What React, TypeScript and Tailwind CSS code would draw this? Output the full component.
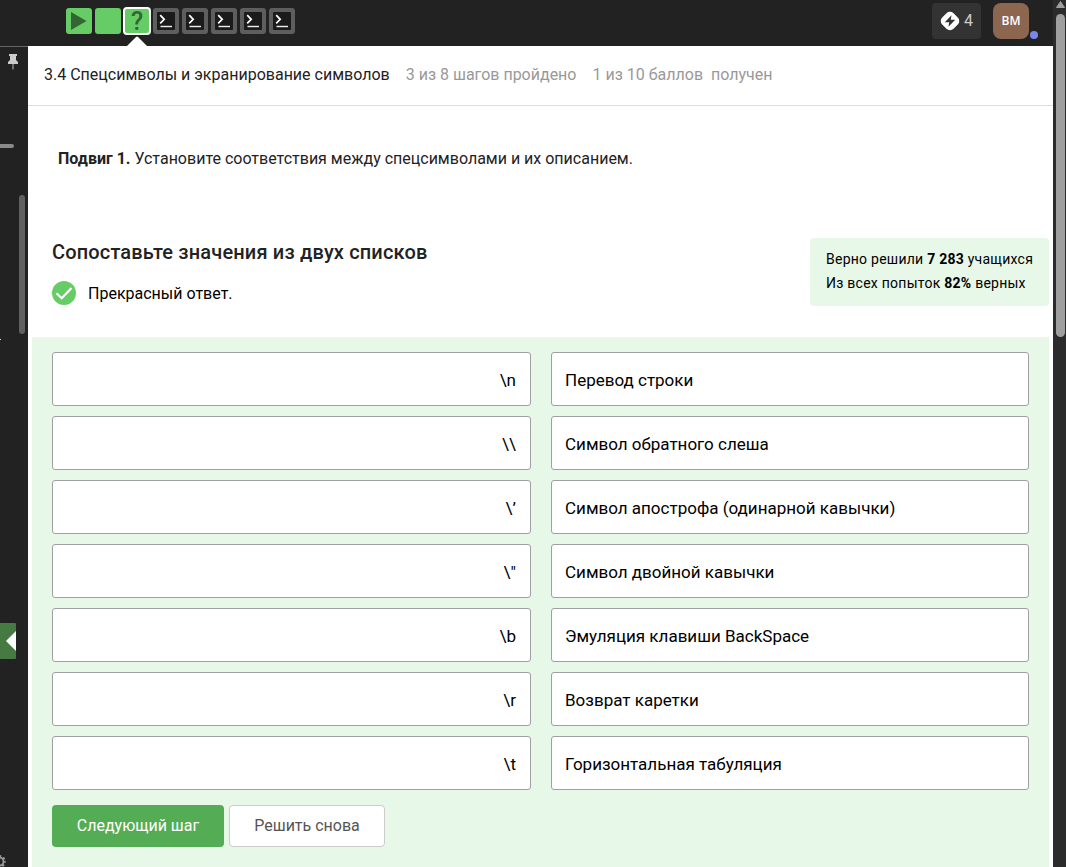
import React from "react";

const pairs: [string, string][] = [
  ["\\n", "Перевод строки"],
  ["\\\\", "Символ обратного слеша"],
  ["\\’", "Символ апострофа (одинарной кавычки)"],
  ["\\\"", "Символ двойной кавычки"],
  ["\\b", "Эмуляция клавиши BackSpace"],
  ["\\r", "Возврат каретки"],
  ["\\t", "Горизонтальная табуляция"],
];

function TerminalStep() {
  return (
    <div className="flex h-[26px] w-[26px] items-center justify-center rounded-[3px] bg-[#5e5e5e]">
      <svg width="18" height="18" viewBox="0 0 18 18" fill="none" stroke="#fff">
        <rect width="18" height="18" rx="1" fill="#1b1b1b" stroke="none" />
        <path d="M3.2 3.2 L7.2 7.3 L3.2 11.4" strokeWidth="1.7" />
        <path d="M3.5 14.5 H15" strokeWidth="1.4" stroke="#eee" />
      </svg>
    </div>
  );
}

function Header() {
  return (
    <header className="flex h-[46px] shrink-0 items-start bg-[#222] pl-[66px]">
      <nav className="flex gap-[3px] pt-2">
        <div className="flex h-[26px] w-[26px] items-center rounded-[3px] bg-[#66cc66] pl-[5px]">
          <svg width="16" height="18" viewBox="0 0 16 18">
            <path d="M0 0 L15.5 9 L0 18 Z" fill="#336633" />
          </svg>
        </div>
        <div className="h-[26px] w-[26px] rounded-[3px] bg-[#66cc66]" />
        <div className="relative -mx-px -mt-px flex h-7 w-7 items-center justify-center rounded-[4px] border-2 border-white bg-[#66cc66]">
          <span className="pt-[2px] text-[25px] leading-[24px] font-medium text-[#336633]">?</span>
          <svg className="absolute top-[27px] left-[2px]" width="20" height="10" viewBox="0 0 20 10">
            <path d="M0 10 L9 1 Q10 0 11 1 L20 10 Z" fill="#fff" />
          </svg>
        </div>
        <TerminalStep />
        <TerminalStep />
        <TerminalStep />
        <TerminalStep />
        <TerminalStep />
      </nav>
      <div className="ml-auto flex pt-[3px] pr-6">
        <div className="flex h-9 w-[49px] items-center rounded-[4px] bg-[#333] pl-2">
          <svg width="20" height="20" viewBox="0 0 20 20">
            <rect x="2" y="2" width="16" height="16" rx="5" fill="#fff" transform="rotate(45 10 10)" />
            <path d="M11.5 4.2 L4.8 11.2 H9.2 L8.5 15.8 L15.2 8.8 H10.8 Z" fill="#333" />
          </svg>
          <span className="ml-1 text-[16px] leading-6 text-[#ccc]">4</span>
        </div>
        <div className="relative ml-3 flex h-9 w-9 items-center justify-center rounded-[8px] bg-[#8d6650]">
          <span className="font-['Open_Sans','Noto_Sans',sans-serif] text-[12px] leading-4 font-semibold text-white">BM</span>
          <span className="absolute top-7 left-[37px] h-2 w-2 rounded-full bg-[#7888e8]" />
        </div>
      </div>
    </header>
  );
}

function Sidebar() {
  return (
    <aside className="relative w-7 shrink-0 overflow-hidden border-t border-[#666] bg-[#222]">
      <svg className="absolute top-[7px] left-2" width="10" height="16" viewBox="0 0 10 16">
        <path d="M1 0 H9 V2 H8 V6 L10 8 V10 H0 V8 L2 6 V2 H1 Z" fill="#ccc" />
        <path d="M5 10 V15.5" stroke="#888" strokeWidth="1.5" />
      </svg>
      <div className="absolute top-[97px] left-0 h-[4px] w-[14px] rounded-r-[2px] bg-[#8a8a8a]" />
      <div className="absolute top-[148px] left-[19px] h-[139px] w-1.5 rounded-full bg-[#606060]" />
      <div className="absolute top-[292px] left-0 h-px w-px bg-[#ddd]" />
      <div className="absolute top-[576px] left-0 flex h-9 w-4 items-center justify-end rounded-r-[1px] bg-[#477a43]">
        <svg width="10" height="20" viewBox="0 0 10 20">
          <path d="M10 0 L0 10 L10 20 Z" fill="#fff" />
        </svg>
      </div>
      <svg className="absolute top-[808px] left-[-7px]" width="13" height="13" viewBox="0 0 13 13" fill="none" stroke="#999">
        <circle cx="6.5" cy="6.5" r="4" strokeWidth="1.8" />
        <circle cx="6.5" cy="6.5" r="5.5" strokeWidth="1.8" strokeDasharray="2.2 2.12" strokeDashoffset="1.1" />
      </svg>
    </aside>
  );
}

function ScrollTrack() {
  return (
    <div className="flex w-[13px] shrink-0 flex-col items-center bg-[#2b2b2b] pt-px pl-[2px]">
      <svg width="9" height="7" viewBox="0 0 9 7">
        <path d="M4.5 0.5 L8.5 6.5 H0.5 Z" fill="#9f9f9f" stroke="#9f9f9f" strokeLinejoin="round" />
      </svg>
      <div className="mt-[6px] h-[323px] w-[9px] rounded-full bg-[#9f9f9f]" />
    </div>
  );
}

export default function App() {
  return (
    <div className="flex h-[867px] w-[1066px] overflow-hidden bg-white font-[Roboto,'Liberation_Sans',sans-serif] text-[16px] leading-6 text-[#222]">
      <div className="flex min-w-0 flex-1 flex-col">
        <Header />
        <div className="flex min-h-0 flex-1">
          <Sidebar />
          <main className="flex min-w-0 flex-1 flex-col">
            <div className="flex h-[60px] shrink-0 items-center gap-4 border-b border-[#ddd] pb-[2px] pl-4 whitespace-pre">
              <span>3.4 Спецсимволы и экранирование символов</span>
              <span className="text-[#999]">3 из 8 шагов пройдено</span>
              <span className="text-[#999]">1 из 10 баллов  получен</span>
            </div>
            <p className="mt-[41px] ml-[30px]">
              <b>Подвиг 1.</b> Установите соответствия между спецсимволами и их описанием.
            </p>
            <section className="mt-[67px] flex h-[99px] shrink-0 justify-between pr-1 pl-6">
              <div>
                <h2 className="text-[20px] leading-7 font-medium tracking-[0.16px]">Сопоставьте значения из двух списков</h2>
                <div className="mt-[15px] flex items-start gap-3 text-black">
                  <svg width="24" height="24" viewBox="0 0 24 24">
                    <circle cx="12" cy="12" r="12" fill="#66cc66" />
                    <path d="M4.5 12.2 L9.7 17.2 L19.5 7" fill="none" stroke="#fff" strokeWidth="2.2" />
                  </svg>
                  <span className="pt-px">Прекрасный ответ.</span>
                </div>
              </div>
              <div className="h-[68px] w-[239px] rounded-[4px] bg-[#e7f7e8] pt-[9px] pl-4 text-[14px] tracking-[0.25px] whitespace-nowrap text-black">
                <p>Верно решили <b>7 283</b> учащихся</p>
                <p>Из всех попыток <b>82%</b> верных</p>
              </div>
            </section>
            <section className="mr-1 ml-1 flex-1 bg-[#e7f7e8] px-5 pt-[15px]">
              <div className="flex flex-col gap-[10px] text-[17px] text-black">
                {pairs.map(([symbol, description]) => (
                  <div key={symbol} className="flex gap-5">
                    <div className="flex h-[54px] w-[479px] items-center justify-end rounded-[3px] border border-[#a0a0a0] bg-white pt-px pr-[14px]">{symbol}</div>
                    <div className="flex h-[54px] w-[478px] items-center rounded-[3px] border border-[#a0a0a0] bg-white pt-px pl-[13px]">{description}</div>
                  </div>
                ))}
              </div>
              <div className="mt-[15px] flex gap-[5px]">
                <button className="h-[42px] w-[172px] rounded-[4px] bg-[#54ad54] text-white">Следующий шаг</button>
                <button className="h-[42px] w-[156px] rounded-[4px] border border-[#ccc] bg-white text-[#555]">Решить снова</button>
              </div>
            </section>
          </main>
        </div>
      </div>
      <ScrollTrack />
    </div>
  );
}
